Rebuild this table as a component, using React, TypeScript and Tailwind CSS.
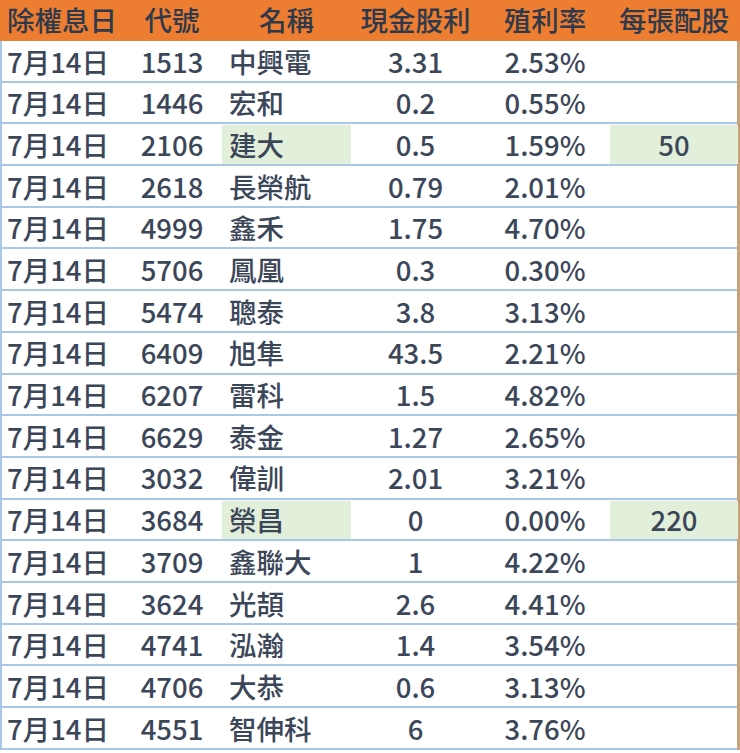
const rows: [string, string, string, string, string][] = [
  ["1513", "中興電", "3.31", "2.53%", ""],
  ["1446", "宏和", "0.2", "0.55%", ""],
  ["2106", "建大", "0.5", "1.59%", "50"],
  ["2618", "長榮航", "0.79", "2.01%", ""],
  ["4999", "鑫禾", "1.75", "4.70%", ""],
  ["5706", "鳳凰", "0.3", "0.30%", ""],
  ["5474", "聰泰", "3.8", "3.13%", ""],
  ["6409", "旭隼", "43.5", "2.21%", ""],
  ["6207", "雷科", "1.5", "4.82%", ""],
  ["6629", "泰金", "1.27", "2.65%", ""],
  ["3032", "偉訓", "2.01", "3.21%", ""],
  ["3684", "榮昌", "0", "0.00%", "220"],
  ["3709", "鑫聯大", "1", "4.22%", ""],
  ["3624", "光頡", "2.6", "4.41%", ""],
  ["4741", "泓瀚", "1.4", "3.54%", ""],
  ["4706", "大恭", "0.6", "3.13%", ""],
  ["4551", "智伸科", "6", "3.76%", ""],
];

const grid = "grid grid-cols-[122px_100px_129px_129px_130px_128px]";

export default function App() {
  return (
    <div
      className="w-[740px] h-[753px] bg-white text-[27.5px] font-medium leading-none text-[#3b4759] overflow-hidden"
      style={{ fontFamily: '"Noto Sans CJK TC", "Noto Sans", sans-serif' }}
    >
      <div className={`${grid} h-[41px] items-center bg-[#ed7d31] pb-[2px] text-[#2e3a4b]`}>
        <div className="pl-[7px] whitespace-nowrap">除權息日</div>
        <div className="text-center">代號</div>
        <div className="text-center">名稱</div>
        <div className="text-center">現金股利</div>
        <div className="text-center">殖利率</div>
        <div className="text-center">每張配股</div>
      </div>
      <div className="w-[740px] border-l-2 border-r-[3px] border-l-[#a9c8e8] border-r-[#c9a27a]">
        {rows.map(([code, name, cash, yld, stock], i) => {
          const hl = stock !== "";
          return (
            <div
              key={i}
              className={`${grid} -ml-[2px] h-[41.7px] border-b-2 border-[#a9c8e8] pt-[1px]`}
            >
              <div className="flex items-center pl-[7px] whitespace-nowrap">7月14日</div>
              <div className="flex items-center justify-center">{code}</div>
              <div className={`flex items-center pl-[7px] ${hl ? "bg-[#e2efda]" : ""}`}>{name}</div>
              <div className="flex items-center justify-center">{cash}</div>
              <div className="flex items-center justify-center">{yld}</div>
              <div className={`flex items-center justify-center ${hl ? "bg-[#e2efda]" : ""}`}>{stock}</div>
            </div>
          );
        })}
      </div>
    </div>
  );
}
